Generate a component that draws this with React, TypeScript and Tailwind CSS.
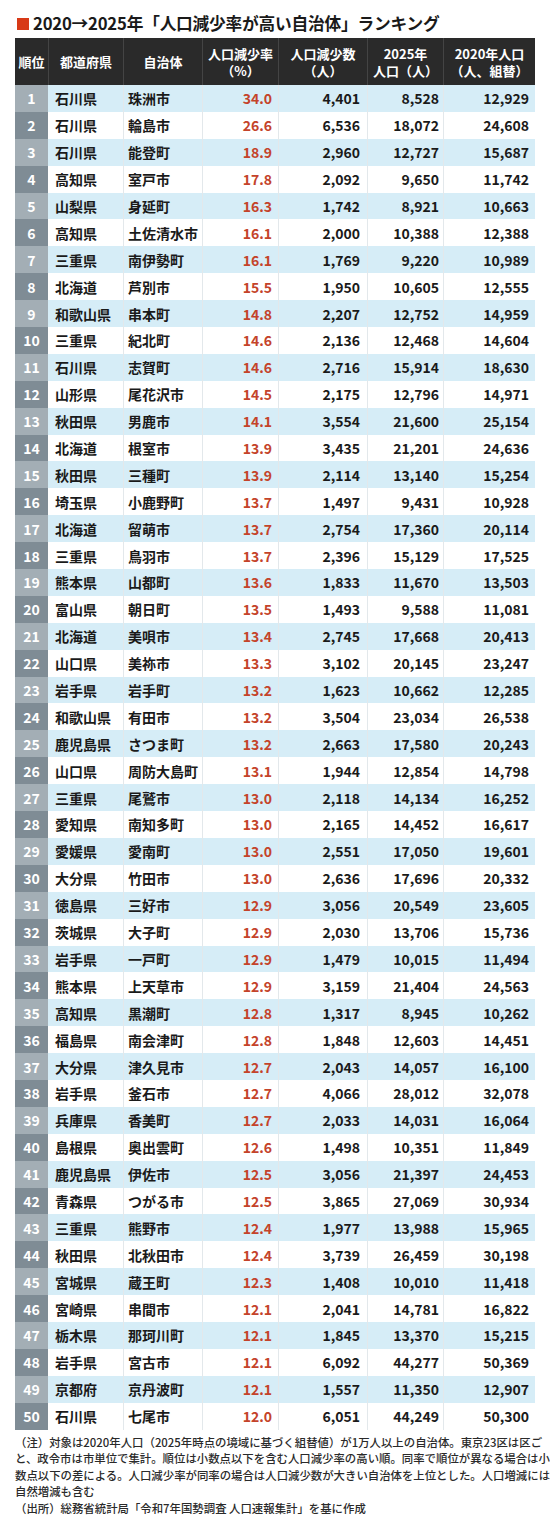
import React from 'react'

type Row = [string, string, string, string, string, string]

const rows: Row[] = [
  ['石川県', '珠洲市', '34.0', '4,401', '8,528', '12,929'],
  ['石川県', '輪島市', '26.6', '6,536', '18,072', '24,608'],
  ['石川県', '能登町', '18.9', '2,960', '12,727', '15,687'],
  ['高知県', '室戸市', '17.8', '2,092', '9,650', '11,742'],
  ['山梨県', '身延町', '16.3', '1,742', '8,921', '10,663'],
  ['高知県', '土佐清水市', '16.1', '2,000', '10,388', '12,388'],
  ['三重県', '南伊勢町', '16.1', '1,769', '9,220', '10,989'],
  ['北海道', '芦別市', '15.5', '1,950', '10,605', '12,555'],
  ['和歌山県', '串本町', '14.8', '2,207', '12,752', '14,959'],
  ['三重県', '紀北町', '14.6', '2,136', '12,468', '14,604'],
  ['石川県', '志賀町', '14.6', '2,716', '15,914', '18,630'],
  ['山形県', '尾花沢市', '14.5', '2,175', '12,796', '14,971'],
  ['秋田県', '男鹿市', '14.1', '3,554', '21,600', '25,154'],
  ['北海道', '根室市', '13.9', '3,435', '21,201', '24,636'],
  ['秋田県', '三種町', '13.9', '2,114', '13,140', '15,254'],
  ['埼玉県', '小鹿野町', '13.7', '1,497', '9,431', '10,928'],
  ['北海道', '留萌市', '13.7', '2,754', '17,360', '20,114'],
  ['三重県', '鳥羽市', '13.7', '2,396', '15,129', '17,525'],
  ['熊本県', '山都町', '13.6', '1,833', '11,670', '13,503'],
  ['富山県', '朝日町', '13.5', '1,493', '9,588', '11,081'],
  ['北海道', '美唄市', '13.4', '2,745', '17,668', '20,413'],
  ['山口県', '美祢市', '13.3', '3,102', '20,145', '23,247'],
  ['岩手県', '岩手町', '13.2', '1,623', '10,662', '12,285'],
  ['和歌山県', '有田市', '13.2', '3,504', '23,034', '26,538'],
  ['鹿児島県', 'さつま町', '13.2', '2,663', '17,580', '20,243'],
  ['山口県', '周防大島町', '13.1', '1,944', '12,854', '14,798'],
  ['三重県', '尾鷲市', '13.0', '2,118', '14,134', '16,252'],
  ['愛知県', '南知多町', '13.0', '2,165', '14,452', '16,617'],
  ['愛媛県', '愛南町', '13.0', '2,551', '17,050', '19,601'],
  ['大分県', '竹田市', '13.0', '2,636', '17,696', '20,332'],
  ['徳島県', '三好市', '12.9', '3,056', '20,549', '23,605'],
  ['茨城県', '大子町', '12.9', '2,030', '13,706', '15,736'],
  ['岩手県', '一戸町', '12.9', '1,479', '10,015', '11,494'],
  ['熊本県', '上天草市', '12.9', '3,159', '21,404', '24,563'],
  ['高知県', '黒潮町', '12.8', '1,317', '8,945', '10,262'],
  ['福島県', '南会津町', '12.8', '1,848', '12,603', '14,451'],
  ['大分県', '津久見市', '12.7', '2,043', '14,057', '16,100'],
  ['岩手県', '釜石市', '12.7', '4,066', '28,012', '32,078'],
  ['兵庫県', '香美町', '12.7', '2,033', '14,031', '16,064'],
  ['島根県', '奥出雲町', '12.6', '1,498', '10,351', '11,849'],
  ['鹿児島県', '伊佐市', '12.5', '3,056', '21,397', '24,453'],
  ['青森県', 'つがる市', '12.5', '3,865', '27,069', '30,934'],
  ['三重県', '熊野市', '12.4', '1,977', '13,988', '15,965'],
  ['秋田県', '北秋田市', '12.4', '3,739', '26,459', '30,198'],
  ['宮城県', '蔵王町', '12.3', '1,408', '10,010', '11,418'],
  ['宮崎県', '串間市', '12.1', '2,041', '14,781', '16,822'],
  ['栃木県', '那珂川町', '12.1', '1,845', '13,370', '15,215'],
  ['岩手県', '宮古市', '12.1', '6,092', '44,277', '50,369'],
  ['京都府', '京丹波町', '12.1', '1,557', '11,350', '12,907'],
  ['石川県', '七尾市', '12.0', '6,051', '44,249', '50,300'],
]

const cols = 'grid grid-cols-[33px_75px_79px_76px_89px_76px_92px]'

const headers = [
  ['順位'],
  ['都道府県'],
  ['自治体'],
  ['人口減少率', '（%）'],
  ['人口減少数', '（人）'],
  ['2025年', '人口（人）'],
  ['2020年人口', '（人、組替）'],
]

const notes = [
  '（注）対象は2020年人口（2025年時点の境域に基づく組替値）が1万人以上の自治体。東京23区は区ご',
  'と、政令市は市単位で集計。順位は小数点以下を含む人口減少率の高い順。同率で順位が異なる場合は小',
  '数点以下の差による。人口減少率が同率の場合は人口減少数が大きい自治体を上位とした。人口増減には',
  '自然増減も含む',
  '（出所）総務省統計局「令和7年国勢調査 人口速報集計」を基に作成',
]

export default function App() {
  return (
    <div className="min-h-[1537px] w-[550px] bg-white font-['Noto_Sans_CJK_JP','Noto_Sans',sans-serif] text-[#1a1a1a]">
      <div className="px-[15px] pt-[9px]">
        <h1 className="flex h-[29px] items-center gap-[4px] text-[16.7px] font-bold leading-none tracking-[-0.2px]">
          <span className="ml-[2px] h-[12px] w-[12px] bg-[#d83a17]" />
          2020→2025年「人口減少率が高い自治体」ランキング
        </h1>

        <div className="w-[520px]">
          <div className={`${cols} h-[47px] bg-[#2a2a2a] text-[13px] font-bold leading-[17px] text-white`}>
            {headers.map((h, i) => (
              <div
                key={i}
                className={`flex flex-col items-center justify-center whitespace-nowrap ${i > 0 ? 'border-l border-[#444]' : ''}`}
              >
                {h.map((line) => (
                  <span key={line}>{line}</span>
                ))}
              </div>
            ))}
          </div>

          {rows.map((r, i) => {
            const odd = i % 2 === 0
            return (
              <div
                key={i}
                className={`${cols} h-[26.9px] text-[14px] font-bold leading-none ${odd ? 'bg-[#d6edf7]' : 'bg-white'}`}
              >
                <div
                  className={`flex items-center justify-center text-white ${odd ? 'bg-[#a3aeb5]' : 'bg-[#7f8c95]'}`}
                >
                  {i + 1}
                </div>
                <div className="flex items-center whitespace-nowrap pl-[7px]">{r[0]}</div>
                <div className="flex items-center whitespace-nowrap border-l border-[#e3e8eb] pl-[4px]">{r[1]}</div>
                <div className="flex items-center justify-end border-l border-[#e3e8eb] pr-[6px] text-[#c4432a]">
                  {r[2]}
                </div>
                <div className="flex items-center justify-end border-l border-[#e3e8eb] pr-[7px]">{r[3]}</div>
                <div className="flex items-center justify-end border-l border-[#e3e8eb] pr-[4px]">{r[4]}</div>
                <div className="flex items-center justify-end border-l border-[#e3e8eb] pr-[6px]">{r[5]}</div>
              </div>
            )
          })}
        </div>

        <div className="pt-[4px] text-[11.4px] font-medium leading-[16.5px] text-[#2a2a2a]">
          {notes.map((n) => (
            <p key={n} className="whitespace-nowrap">
              {n}
            </p>
          ))}
        </div>
      </div>
    </div>
  )
}
